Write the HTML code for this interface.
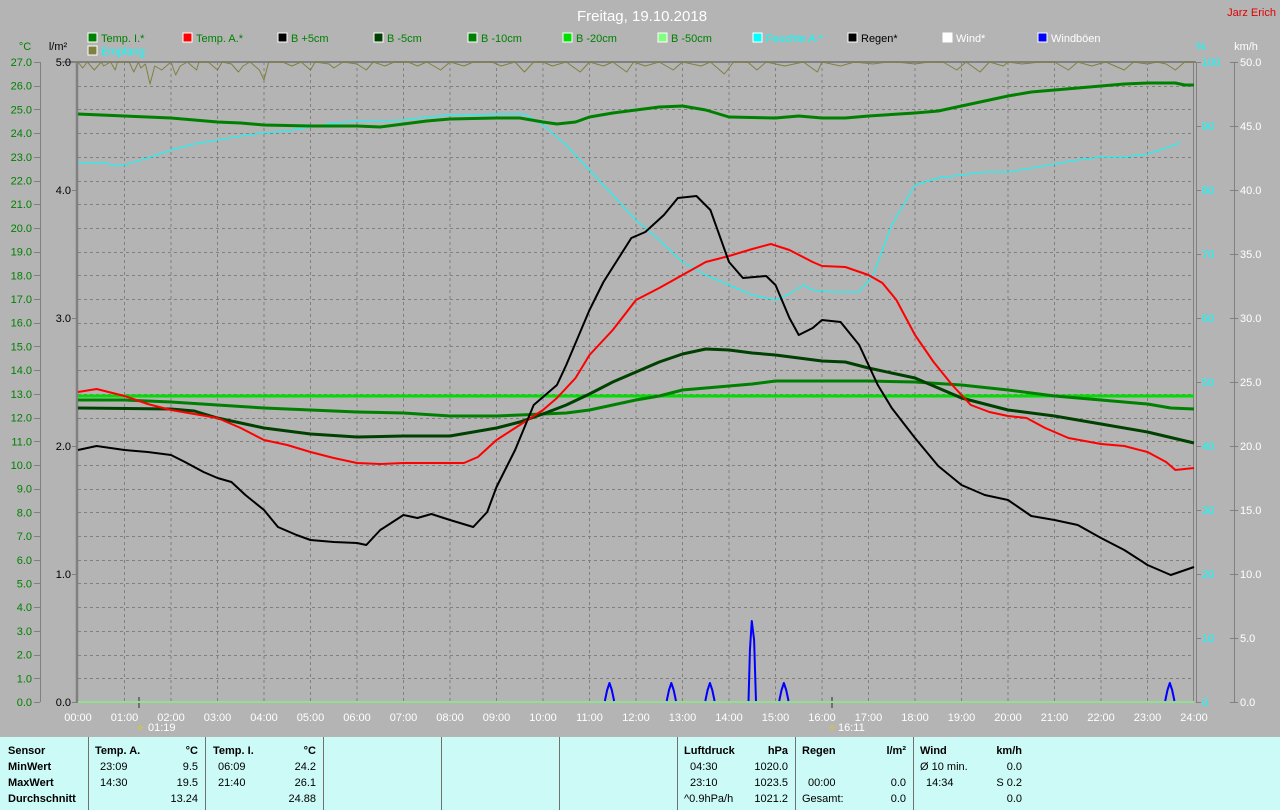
<!DOCTYPE html>
<html><head><meta charset="utf-8"><style>
html,body{margin:0;padding:0;width:1280px;height:810px;overflow:hidden;background:#b4b4b4;font-family:"Liberation Sans",sans-serif;font-size:11px}
#tbl{position:absolute;left:0;top:737px;width:1280px;height:73px;background:#ccfaf6}
.sep{position:absolute;top:0;width:1px;height:73px;background:#707070}
.t{position:absolute;white-space:nowrap;color:#000;font-size:11px}
.b{font-weight:bold}
.r{text-align:right}
</style></head><body>
<svg width="1280" height="737" style="position:absolute;left:0;top:0" font-family="Liberation Sans, sans-serif" font-size="11">
<text x="642" y="21" fill="#fff" font-size="15" text-anchor="middle">Freitag, 19.10.2018</text>
<text x="1276" y="16" fill="#e00000" font-size="11" text-anchor="end">Jarz Erich</text>
<g font-size="11">
<rect x="88" y="33" width="9" height="9" fill="#008000" stroke="#fff"/><text x="101" y="42" fill="#008000">Temp. I.*</text>
<rect x="183" y="33" width="9" height="9" fill="#f00" stroke="#fff"/><text x="196" y="42" fill="#008000">Temp. A.*</text>
<rect x="278" y="33" width="9" height="9" fill="#000" stroke="#fff"/><text x="291" y="42" fill="#008000">B +5cm</text>
<rect x="374" y="33" width="9" height="9" fill="#004000" stroke="#fff"/><text x="387" y="42" fill="#008000">B -5cm</text>
<rect x="468" y="33" width="9" height="9" fill="#008000" stroke="#fff"/><text x="481" y="42" fill="#008000">B -10cm</text>
<rect x="563" y="33" width="9" height="9" fill="#00e000" stroke="#fff"/><text x="576" y="42" fill="#008000">B -20cm</text>
<rect x="658" y="33" width="9" height="9" fill="#80ff80" stroke="#fff"/><text x="671" y="42" fill="#008000">B -50cm</text>
<rect x="753" y="33" width="9" height="9" fill="#00ffff" stroke="#fff"/><text x="766" y="42" fill="#00ffff">Feuchte A.*</text>
<rect x="848" y="33" width="9" height="9" fill="#000" stroke="#fff"/><text x="861" y="42" fill="#000">Regen*</text>
<rect x="943" y="33" width="9" height="9" fill="#fff" stroke="#fff"/><text x="956" y="42" fill="#fff">Wind*</text>
<rect x="1038" y="33" width="9" height="9" fill="#0000ff" stroke="#fff"/><text x="1051" y="42" fill="#fff">Windböen</text>
<rect x="88" y="46" width="9" height="9" fill="#808040" stroke="#fff"/><text x="101" y="55" fill="#00ffff">Empfang</text>
</g>
<text x="25" y="50" fill="#008000" text-anchor="middle">°C</text>
<text x="58" y="50" fill="#000" text-anchor="middle">l/m²</text>
<text x="1201" y="50" fill="#00ffff" text-anchor="middle">%</text>
<text x="1246" y="50" fill="#fff" text-anchor="middle">km/h</text>
<g stroke="#808080" stroke-dasharray="3,3" stroke-width="1">
<path d="M124.5 62V702M171 62V702M217.5 62V702M264 62V702M310.5 62V702M357 62V702M403.5 62V702M450 62V702M496.5 62V702M543 62V702M589.5 62V702M636 62V702M682.5 62V702M729 62V702M775.5 62V702M822 62V702M868.5 62V702M915 62V702M961.5 62V702M1008 62V702M1054.5 62V702M1101 62V702M1147.5 62V702"/>
</g>
<g id="hgrid" stroke="#808080" stroke-dasharray="3,3"></g>
<g stroke="#808080" stroke-width="1" fill="none">
<path d="M40.5 62V702"/>
<path d="M1234.5 62V702"/>
<path d="M62 62H1196" stroke-width="2"/>
<path d="M77 62V703" stroke-width="2.5"/>
<path d="M1193.5 62V703M1196.5 62V703"/>
<path d="M139 697V708M832 697V708" stroke="#707070" stroke-width="2"/>
</g>
<g id="ticks" stroke="#808080"></g>
<g id="labels"></g>
<g fill="#fff" text-anchor="middle" id="xl"></g>
<text x="148" y="731" fill="#fff" font-size="11">01:19</text>
<text x="136" y="731" fill="#e0d000" font-size="10">✧</text>
<text x="838" y="731" fill="#fff" font-size="11">16:11</text>
<text x="828" y="731" fill="#e0d000" font-size="10">✧</text>
<g transform="translate(78,0) scale(46.5,1)" fill="none" stroke-linejoin="round">
<polyline vector-effect="non-scaling-stroke" stroke="#808040" stroke-width="1" points="0,62 0.1,68 0.2,62 0.35,70 0.5,62 0.55,66 0.7,62 0.8,70 0.85,62 1.1,62 1.2,72 1.3,62 1.35,68 1.45,64 1.55,84 1.65,66 1.8,70 2.0,62 2.1,75 2.2,66 2.35,62 2.55,70 2.6,62 2.8,62 3.0,70 3.1,62 3.3,64 3.45,72 3.55,66 3.7,62 3.9,70 4.0,80 4.1,62 4.4,62 4.6,66 4.8,62 5.0,70 5.1,62 5.4,64 5.5,68 5.7,62 6.0,64 6.2,70 6.35,62 6.6,66 6.8,62 7.1,62 7.3,66 7.5,62 7.8,70 8.0,62 8.3,66 8.5,62 8.9,62 9.1,66 9.4,62 9.6,72 9.8,62 10.0,62 10.2,66 10.5,62 10.8,72 11.0,62 11.3,66 11.5,62 11.8,72 11.95,62 12.2,66 12.5,62 12.8,70 13.0,62 13.4,66 13.6,62 13.9,74 14.1,62 14.4,62 14.6,70 14.8,62 15.2,66 15.6,62 15.9,72 16.0,62 16.4,66 16.7,62 17.1,64 17.4,62 17.6,62 18.0,64 18.3,62 18.6,62 18.9,70 19.1,62 19.4,72 19.6,62 19.9,66 20.0,62 20.3,64 20.7,62 21.0,62 21.3,70 21.5,62 21.8,66 22.1,62 22.5,70 22.7,62 23.0,64 23.2,62 23.4,64 23.6,70 23.8,62 24,62"/>
<polyline vector-effect="non-scaling-stroke" stroke="#00ffff" stroke-width="1" points="0,163 0.6,163 0.8,166 1.0,165 1.5,158 2,150 2.5,144 3,140 3.5,136 4,133 4.5,131 5,127 5.5,123 6,121 6.5,121 7,120 7.5,117 8,115 8.5,115 9,114 9.6,114 10,125 10.5,145 11,170 11.5,195 12,220 12.5,240 13,262 13.5,275 14,285 14.5,295 15,300 15.3,294 15.6,285 15.8,290 16.2,292 16.8,292 17.1,275 17.5,225 18,185 18.5,178 19,175 19.5,172 20,172 20.5,168 21,164 21.5,160 22,157 22.5,157 23,154 23.4,148 23.7,143"/>
<polyline vector-effect="non-scaling-stroke" stroke="#008000" stroke-width="3" points="0,114 0.5,115 1,116 2,118 2.5,120 3,122 3.5,123 4,125 5,126 6,126 6.5,127 7,124 7.5,121 8,119 9,118 9.5,118 10,122 10.3,124 10.7,122 11,117 11.5,113 12,110 12.5,107 13,106 13.5,110 14,117 15,118 15.5,116 16,118 16.5,118 17,116 18,113 18.5,111 19,106 19.5,101 20,96 20.5,92 21,90 21.5,88 22,86 22.5,84 23,83 23.6,83 23.8,85 24,85"/>
<polyline vector-effect="non-scaling-stroke" stroke="#00dd00" stroke-width="3" points="0,396 24,396"/>
<polyline vector-effect="non-scaling-stroke" stroke="#008000" stroke-width="3" points="0,400 1,400 2,402 3,405 4,408 5,410 6,412 7,413 8,416 9,416 10,414 10.5,413 11,410 11.5,405 12,400 12.5,396 13,390 13.5,388 14,386 14.5,384 15,381 17,381 18,382 19,385 20,390 21,396 22,400 23,404 23.5,408 24,409"/>
<polyline vector-effect="non-scaling-stroke" stroke="#004000" stroke-width="3" points="0,408 2,409 2.5,411 3,418 4,428 5,434 6,437 7,436 8,436 8.5,432 9,428 9.5,422 10,414 10.5,405 11,394 11.5,382 12,372 12.5,362 13,354 13.5,349 14,350 14.5,353 15,355 16,361 16.5,362 17,368 18,378 19,398 20,410 21,416 22,424 23,432 24,443"/>
<polyline vector-effect="non-scaling-stroke" stroke="#ff0000" stroke-width="2" points="0,392 0.4,389 1,396 1.5,404 2,410 2.5,414 3,418 3.5,428 4,440 4.5,445 5,452 5.5,458 6,463 6.5,464 7,463 8,463 8.3,463 8.6,457 9,440 9.5,425 10,410 10.3,398 10.7,378 11,355 11.5,330 12,300 12.5,288 13,275 13.5,262 14,256 14.5,249 14.9,244 15.3,250 15.8,262 16,266 16.5,267 17,275 17.3,283 17.6,300 18,335 18.4,362 18.8,385 19.2,405 19.6,412 20,416 20.4,418 20.8,428 21.3,438 22,444 22.5,446 23,452 23.4,462 23.6,470 24,468"/>
<polyline vector-effect="non-scaling-stroke" stroke="#000" stroke-width="2" points="0,450 0.4,446 1,450 1.5,452 2,455 2.3,462 2.7,472 3,478 3.3,482 3.6,495 4,510 4.3,527 4.7,535 5,540 5.5,542 6,543 6.2,545 6.5,530 7,515 7.3,518 7.6,514 8,520 8.5,527 8.8,512 9,487 9.4,450 9.8,405 10.3,385 10.5,365 11,310 11.3,282 11.6,260 11.9,238 12.2,232 12.6,215 12.9,198 13.3,196 13.6,210 14.0,262 14.3,278 14.8,276 15.0,285 15.3,318 15.5,335 15.8,328 16.0,320 16.4,322 16.8,345 17.2,385 17.5,408 18,438 18.5,466 19,485 19.5,495 20,500 20.5,516 21,520 21.5,525 22,538 22.5,550 23,565 23.5,575 24,567"/>
<polyline vector-effect="non-scaling-stroke" stroke="#90e090" stroke-width="2" points="0,702 24,702"/>
<polyline vector-effect="non-scaling-stroke" stroke="#0000ff" stroke-width="2" points="11.33,701 11.38,690 11.43,683 11.48,690 11.53,701"/>
<polyline vector-effect="non-scaling-stroke" stroke="#0000ff" stroke-width="2" points="12.66,701 12.71,690 12.76,683 12.81,690 12.86,701"/>
<polyline vector-effect="non-scaling-stroke" stroke="#0000ff" stroke-width="2" points="13.49,701 13.54,690 13.59,683 13.64,690 13.69,701"/>
<polyline vector-effect="non-scaling-stroke" stroke="#0000ff" stroke-width="2" points="14.42,701 14.45,650 14.49,621 14.54,640 14.58,701"/>
<polyline vector-effect="non-scaling-stroke" stroke="#0000ff" stroke-width="2" points="15.08,701 15.13,690 15.18,683 15.23,690 15.28,701"/>
<polyline vector-effect="non-scaling-stroke" stroke="#0000ff" stroke-width="2" points="23.38,701 23.43,690 23.48,683 23.53,690 23.58,701"/>
</g>
</svg>
<script>
(function(){
var ns="http://www.w3.org/2000/svg";
function el(p,t,a,txt){var e=document.createElementNS(ns,t);for(var k in a)e.setAttribute(k,a[k]);if(txt!=null)e.textContent=txt;p.appendChild(e);return e;}
var hg=document.getElementById('hgrid'),tk=document.getElementById('ticks'),lb=document.getElementById('labels'),xl=document.getElementById('xl');
for(var k=0;k<=27;k++){var y=702-k*(640/27);
 if(k>0&&k<27)el(hg,'path',{d:'M78 '+(Math.round(y)+0.5)+'H1193'});
 el(tk,'path',{d:'M34 '+(Math.round(y)+0.5)+'H40'});
 el(lb,'text',{x:32,y:y+4,fill:'#008000','text-anchor':'end'},k.toFixed(1));}
for(var k=0;k<=5;k++){var y=702-k*128;el(tk,'path',{d:'M72 '+(y+0.5)+'H77'});el(lb,'text',{x:71,y:y+4,fill:'#000','text-anchor':'end'},k.toFixed(1));}
for(var k=0;k<=10;k++){var y=702-k*64;el(tk,'path',{d:'M1196 '+(y+0.5)+'H1201'});el(tk,'path',{d:'M1230 '+(y+0.5)+'H1238'});
 el(lb,'text',{x:1202,y:y+4,fill:'#00ffff'},String(k*10));
 el(lb,'text',{x:1240,y:y+4,fill:'#fff'},(k*5).toFixed(1));}
for(var h=0;h<=24;h++){el(xl,'text',{x:78+46.5*h,y:721},(h<10?'0':'')+h+':00');}
})();
</script>
<div id="tbl">
<div class="sep" style="left:88px"></div><div class="sep" style="left:205px"></div><div class="sep" style="left:323px"></div><div class="sep" style="left:441px"></div><div class="sep" style="left:559px"></div><div class="sep" style="left:677px"></div><div class="sep" style="left:795px"></div><div class="sep" style="left:913px"></div>
<div class="t b" style="left:8px;top:8px">Sensor</div>
<div class="t b" style="left:8px;top:24px">MinWert</div>
<div class="t b" style="left:8px;top:40px">MaxWert</div>
<div class="t b" style="left:8px;top:56px">Durchschnitt</div>
<div class="t b" style="left:95px;top:8px">Temp. A.</div><div class="t b r" style="left:160px;width:38px;top:8px">°C</div>
<div class="t" style="left:100px;top:24px">23:09</div><div class="t r" style="left:160px;width:38px;top:24px">9.5</div>
<div class="t" style="left:100px;top:40px">14:30</div><div class="t r" style="left:160px;width:38px;top:40px">19.5</div>
<div class="t r" style="left:150px;width:48px;top:56px">13.24</div>
<div class="t b" style="left:213px;top:8px">Temp. I.</div><div class="t b r" style="left:278px;width:38px;top:8px">°C</div>
<div class="t" style="left:218px;top:24px">06:09</div><div class="t r" style="left:278px;width:38px;top:24px">24.2</div>
<div class="t" style="left:218px;top:40px">21:40</div><div class="t r" style="left:278px;width:38px;top:40px">26.1</div>
<div class="t r" style="left:268px;width:48px;top:56px">24.88</div>
<div class="t b" style="left:684px;top:8px">Luftdruck</div><div class="t b r" style="left:740px;width:48px;top:8px">hPa</div>
<div class="t" style="left:690px;top:24px">04:30</div><div class="t r" style="left:740px;width:48px;top:24px">1020.0</div>
<div class="t" style="left:690px;top:40px">23:10</div><div class="t r" style="left:740px;width:48px;top:40px">1023.5</div>
<div class="t" style="left:684px;top:56px">^0.9hPa/h</div><div class="t r" style="left:740px;width:48px;top:56px">1021.2</div>
<div class="t b" style="left:802px;top:8px">Regen</div><div class="t b r" style="left:860px;width:46px;top:8px">l/m²</div>
<div class="t" style="left:808px;top:40px">00:00</div><div class="t r" style="left:860px;width:46px;top:40px">0.0</div>
<div class="t" style="left:802px;top:56px">Gesamt:</div><div class="t r" style="left:860px;width:46px;top:56px">0.0</div>
<div class="t b" style="left:920px;top:8px">Wind</div><div class="t b r" style="left:975px;width:47px;top:8px">km/h</div>
<div class="t" style="left:920px;top:24px">Ø 10 min.</div><div class="t r" style="left:975px;width:47px;top:24px">0.0</div>
<div class="t" style="left:926px;top:40px">14:34</div><div class="t r" style="left:975px;width:47px;top:40px">S 0.2</div>
<div class="t r" style="left:975px;width:47px;top:56px">0.0</div>
</div>
</body></html>
